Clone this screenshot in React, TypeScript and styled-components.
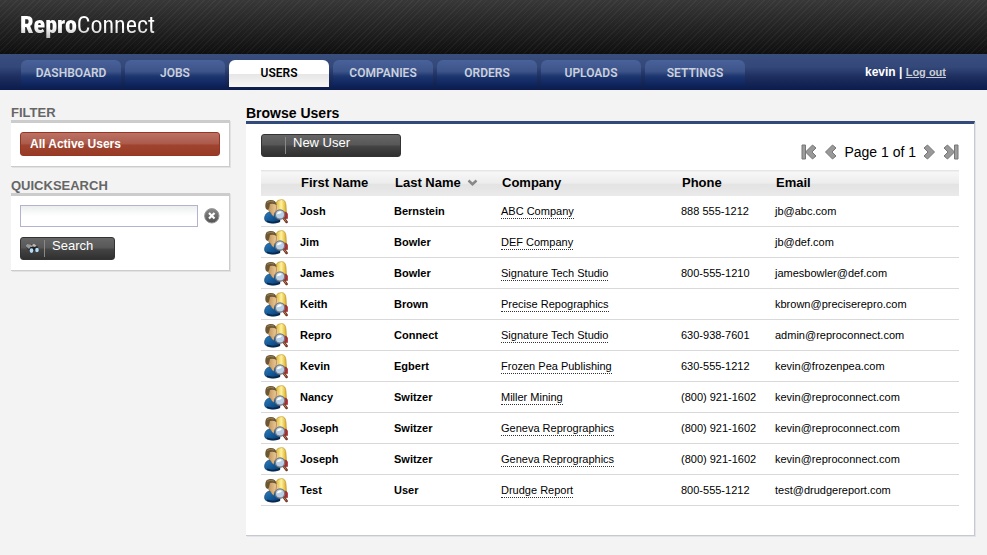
import React from "react";
import styled, { createGlobalStyle } from "styled-components";

const GlobalStyle = createGlobalStyle`
  * { box-sizing: border-box; }
  body {
    margin: 0;
    background: #f3f3f3;
    color: #000;
    font: 11px/16px "Liberation Sans", Arial, sans-serif;
  }
  button, input { font-family: inherit; }
`;

const Header = styled.header`
  display: flex;
  align-items: center;
  height: 54px;
  padding: 0 20px 4px;
  background:
    repeating-linear-gradient(135deg, rgba(255, 255, 255, 0.04) 0 1px, transparent 1px 4px),
    linear-gradient(#383838, #0f0f0f);
`;

const Logo = styled.div`
  font: 24px/32px "Roboto Condensed", "Open Sans Condensed", "Noto Sans ExtraCondensed", "Noto Sans Condensed", Roboto, sans-serif;
  color: transparent;
  background: linear-gradient(#fff 55%, #bbb 90%);
  background-clip: text;

  strong { font-weight: 900; }
`;

const Nav = styled.nav`
  display: flex;
  align-items: flex-start;
  justify-content: space-between;
  height: 36px;
  padding: 6px 41px 0 21px;
  background: linear-gradient(#384e7c, #34487a 35%, #1c2d5e 65%, #0b1c4c);
`;

const Tabs = styled.div`
  display: flex;
  gap: 4px;
`;

const Tab = styled.a<{ $active?: boolean }>`
  width: 100px;
  height: 27px;
  border-radius: 6px 6px 0 0;
  background: ${(p) =>
    p.$active
      ? "linear-gradient(#fff 50%, #e6e6e6 52%, #f6f6f6)"
      : "linear-gradient(#48629a, #3d5489 42%, #1d3670 60%, #0a2058)"};
  color: ${(p) => (p.$active ? "#000" : "#c9d0de")};
  font: 600 12px/27px Roboto, "Trebuchet MS", sans-serif;
  text-align: center;
  text-decoration: none;
`;

const Account = styled.div`
  color: #fff;
  font-size: 12px;
  font-weight: 700;
  line-height: 24px;

  a { color: #c8ccd4; font-size: 11px; }
`;

const Page = styled.div`
  display: flex;
  align-items: flex-start;
  gap: 16px;
  padding: 14px 12px 18px 11px;
`;

const Sidebar = styled.aside`
  flex: 0 0 219px;
`;

const Main = styled.main`
  flex: 1;
  min-width: 0;
`;

const SideTitle = styled.h2`
  margin: 0;
  padding-top: 2px;
  color: #666;
  font-size: 13px;
  line-height: 14px;
`;

const SidePanel = styled.section`
  margin-bottom: 10px;
  padding: 9px 9px 10px;
  background: #fff;
  border: solid #ccc;
  border-width: 3px 1px 1px 0;
  box-shadow: 1px 1px 0 #e2e2e2;
`;

const FilterButton = styled.button`
  display: block;
  width: 100%;
  height: 24px;
  padding: 0 9px;
  border: 1px solid #953522;
  border-radius: 3px;
  background: linear-gradient(#bb7164, #ab5a4a 50%, #a04431 54%, #983a24);
  color: #fff;
  font-size: 12px;
  font-weight: 700;
  line-height: 20px;
  text-align: left;
`;

const SearchRow = styled.div`
  display: flex;
  align-items: center;
  gap: 6px;
  margin-bottom: 10px;
`;

const SearchInput = styled.input`
  flex: 1;
  min-width: 0;
  height: 22px;
  padding: 2px 4px;
  border: 1px solid #b3b3d0;
  background: linear-gradient(#eceeee, #fff 50%);
  font-size: 12px;
`;

const IconButton = styled.button`
  display: flex;
  padding: 0;
  border: 0;
  background: none;
`;

const DarkButton = styled.button<{ $width: number }>`
  display: flex;
  align-items: stretch;
  width: ${(p) => p.$width}px;
  height: 23px;
  padding: 0;
  border: 1px solid #333;
  border-radius: 3px;
  background: linear-gradient(#666, #585858 45%, #434343 55%, #303030);
  color: #fff;
  font-size: 13px;
  line-height: 16px;
`;

const ButtonIcon = styled.span`
  display: flex;
  align-items: center;
  justify-content: center;
  width: 24px;
  margin: 2px 7px 2px 0;
  border-right: 1px solid #888;
`;

const MainTitle = styled.h1`
  margin: 0;
  padding-top: 2px;
  font-size: 14px;
  line-height: 15px;
`;

const MainPanel = styled.section`
  padding: 10px 15px 29px;
  background: #fff;
  border: solid #c6c9d4;
  border-width: 0 1px 1px 0;
  border-top: 3px solid #324a7b;
  box-shadow: 1px 1px 0 #e4e4e8;
`;

const Toolbar = styled.div`
  display: flex;
  align-items: flex-start;
  justify-content: space-between;
  height: 36px;
`;

const Pager = styled.div`
  display: flex;
  align-items: center;
  gap: 7px;
  height: 36px;
  font-size: 14px;
`;

const Table = styled.table`
  width: 100%;
  table-layout: fixed;
  border-collapse: separate;
  border-spacing: 0;
`;

const Col = styled.col<{ $width?: number }>`
  width: ${(p) => (p.$width ? `${p.$width}px` : "auto")};
`;

const HeadRow = styled.tr`
  height: 26px;
  background: linear-gradient(#e6e6e6 1px, #f7f7f7 2px, #ededed 50%, #e3e3e3 56%, #eaeaea);
`;

const HeadCell = styled.th`
  padding: 0 0 0 1px;
  font-size: 13px;
  line-height: 16px;
  text-align: left;

  svg { margin-left: 6px; }
`;

const Cell = styled.td<{ $bold?: boolean }>`
  height: 31px;
  padding: 0;
  border-bottom: 1px solid #d9d9d9;
  font-weight: ${(p) => (p.$bold ? 700 : 400)};
  white-space: nowrap;
`;

const IconCell = styled(Cell)`
  padding-left: 3px;

  svg { display: block; }
`;

const CompanyLink = styled.a`
  display: inline-block;
  color: #000;
  line-height: 13px;
  text-decoration: none;
  border-bottom: 1px dotted #333;
`;

const UserIcon = () => (
  <svg width="24" height="25" viewBox="0 0 24 25" aria-hidden="true">
    <defs>
      <linearGradient id="hair" x2="1"><stop stopColor="#d9b52d" /><stop offset=".5" stopColor="#fff2a0" /><stop offset="1" stopColor="#d8a91f" /></linearGradient>
      <linearGradient id="shirt" x2="1" y2="1"><stop stopColor="#2f7cba" /><stop offset=".5" stopColor="#155a98" /><stop offset="1" stopColor="#0a3466" /></linearGradient>
      <linearGradient id="skin" x2="1"><stop stopColor="#b98b55" /><stop offset="1" stopColor="#eccb95" /></linearGradient>
    </defs>
    <path d="M12 4Q13 .6 17.5 .6Q21.500 .6 22 6L22.5 14Q18 17 13 13Z" fill="url(#hair)" stroke="#b8922c" strokeWidth=".6" />
    <path d="M12 5Q14.5 6 14.5 10L13 14H11Z" fill="#efc78c" />
    <path d="M19 13Q23.6 12.5 23.6 16V19.5H19Z" fill="#b3282a" stroke="#7e1719" strokeWidth=".5" />
    <path d="M.5 20Q.5 14.5 5 13L11 13Q15.5 15 16 19V22.5Q12 25 6 24Q.5 23 .5 20Z" fill="url(#shirt)" stroke="#0b3560" strokeWidth=".5" />
    <path d="M3 21.5Q9 24 16 21V23Q9 25.5 3 23Z" fill="#08284c" />
    <path d="M3 6Q4 3 8 3Q12.5 3 12.5 8Q12.5 14 8.5 15Q4 13 3 6Z" fill="url(#skin)" stroke="#865c2d" strokeWidth=".5" />
    <path d="M1.3 6Q1.5 1.2 6 1Q12 .6 12.600 6Q9 4 6 5L5 9.5L3.5 11Q1 10 1.3 6Z" fill="#6b5734" />
    <path d="M3 3.5Q6 1.5 10 3" fill="none" stroke="#9c824e" strokeWidth=".9" />
    <path d="M7 14.5L10.5 13.5L9.5 17.5Z" fill="#dfac6d" />
    <path d="M20 19.5L22.6 23" stroke="#6e3322" strokeWidth="2.6" strokeLinecap="round" />
    <path d="M20 19.5L22.2 22.5" stroke="#cc8c58" strokeWidth=".9" />
    <circle cx="16" cy="15.5" r="4.7" fill="#b9cfe5" stroke="#73777f" strokeWidth="1.3" />
    <path d="M12.8 15.2Q13.5 12.2 17 12.2Q18.5 14 16 14.5Q14.5 15 12.8 15.2Z" fill="#fff" />
  </svg>
);

const PageArrow = ({ end, forward }: { end?: boolean; forward?: boolean }) => (
  <svg width={end ? 16 : 13} height="16" viewBox={end ? "0 0 16 16" : "0 0 13 16"} aria-hidden="true">
    <g transform={forward ? `matrix(-1 0 0 1 ${end ? 16 : 13} 0)` : undefined} strokeLinejoin="round">
      <path
        d={end ? "M4.500 8L11.5 1L15 4L11 8L15 12L11.5 15Z" : "M1.5 8L8.5 1L12 4L8 8L12 12L8.5 15Z"}
        fill="#999"
        stroke="#777"
      />
      {end && <path d="M1 1H4.5V15H1Z" fill="#9d9d9d" stroke="#777" />}
    </g>
  </svg>
);

const SortIcon = () => (
  <svg width="11" height="8" viewBox="0 0 11 8" aria-hidden="true">
    <path d="M1.5 1.5L5.5 5.2L9.5 1.5" fill="none" stroke="#888" strokeWidth="2.6" />
  </svg>
);

const ClearIcon = () => (
  <svg width="16" height="16" viewBox="0 0 16 16" aria-hidden="true">
    <defs><linearGradient id="clear" x2="0" y2="1"><stop stopColor="#8a8a8a" /><stop offset="1" stopColor="#505050" /></linearGradient></defs>
    <circle cx="7.8" cy="7.8" r="7.2" fill="url(#clear)" stroke="#999" />
    <path d="M5 5L10.5 10.5M10.5 5L5 10.5" stroke="#fff" strokeWidth="2.2" />
  </svg>
);

const BinocularsIcon = () => (
  <svg width="15" height="11" viewBox="0 0 15 11" aria-hidden="true">
    <path d="M.5 3L2 1L6 1.5L8 1L12 2.5L14 7Q14 9.5 12 9.5L9 7L8.5 9Q6 11 4.5 8Z" fill="#202020" />
    <path d="M.5 3L2 1L6 1.5L8 4L5.5 4L4 6Z" fill="#999" />
    <path d="M6.5 2L9 .8L12 3L9 4Z" fill="#bbb" />
    <ellipse cx="6.5" cy="7.6" rx="1.9" ry="2.3" fill="#b4dcf6" />
    <ellipse cx="12" cy="7" rx="1.8" ry="2.3" fill="#b4dcf6" />
  </svg>
);

const tabs = ["DASHBOARD", "JOBS", "USERS", "COMPANIES", "ORDERS", "UPLOADS", "SETTINGS"];

const users = [
  ["Josh", "Bernstein", "ABC Company", "888 555-1212", "jb@abc.com"],
  ["Jim", "Bowler", "DEF Company", "", "jb@def.com"],
  ["James", "Bowler", "Signature Tech Studio", "800-555-1210", "jamesbowler@def.com"],
  ["Keith", "Brown", "Precise Repographics", "", "kbrown@preciserepro.com"],
  ["Repro", "Connect", "Signature Tech Studio", "630-938-7601", "admin@reproconnect.com"],
  ["Kevin", "Egbert", "Frozen Pea Publishing", "630-555-1212", "kevin@frozenpea.com"],
  ["Nancy", "Switzer", "Miller Mining", "(800) 921-1602", "kevin@reproconnect.com"],
  ["Joseph", "Switzer", "Geneva Reprographics", "(800) 921-1602", "kevin@reproconnect.com"],
  ["Joseph", "Switzer", "Geneva Reprographics", "(800) 921-1602", "kevin@reproconnect.com"],
  ["Test", "User", "Drudge Report", "800-555-1212", "test@drudgereport.com"],
];

export default function App() {
  return (
    <>
      <GlobalStyle />
      <Header>
        <Logo><strong>Repro</strong>Connect</Logo>
      </Header>
      <Nav>
        <Tabs>
          {tabs.map((tab) => (
            <Tab key={tab} href="#" $active={tab === "USERS"}>{tab}</Tab>
          ))}
        </Tabs>
        <Account>kevin | <a href="#">Log out</a></Account>
      </Nav>
      <Page>
        <Sidebar>
          <SideTitle>FILTER</SideTitle>
          <SidePanel>
            <FilterButton>All Active Users</FilterButton>
          </SidePanel>
          <SideTitle>QUICKSEARCH</SideTitle>
          <SidePanel>
            <SearchRow>
              <SearchInput type="text" aria-label="Quicksearch" />
              <IconButton aria-label="Clear search"><ClearIcon /></IconButton>
            </SearchRow>
            <DarkButton $width={95}><ButtonIcon><BinocularsIcon /></ButtonIcon>Search</DarkButton>
          </SidePanel>
        </Sidebar>
        <Main>
          <MainTitle>Browse Users</MainTitle>
          <MainPanel>
            <Toolbar>
              <DarkButton $width={140}><ButtonIcon />New User</DarkButton>
              <Pager>
                <IconButton aria-label="First page"><PageArrow end /></IconButton>
                <IconButton aria-label="Previous page"><PageArrow /></IconButton>
                <span>Page 1 of 1</span>
                <IconButton aria-label="Next page"><PageArrow forward /></IconButton>
                <IconButton aria-label="Last page"><PageArrow end forward /></IconButton>
              </Pager>
            </Toolbar>
            <Table>
              <colgroup>
                <Col $width={39} /><Col $width={94} /><Col $width={107} />
                <Col $width={180} /><Col $width={94} /><Col />
              </colgroup>
              <thead>
                <HeadRow>
                  <HeadCell />
                  <HeadCell>First Name</HeadCell>
                  <HeadCell>Last Name<SortIcon /></HeadCell>
                  <HeadCell>Company</HeadCell>
                  <HeadCell>Phone</HeadCell>
                  <HeadCell>Email</HeadCell>
                </HeadRow>
              </thead>
              <tbody>
                {users.map(([first, last, company, phone, email], i) => (
                  <tr key={i}>
                    <IconCell><UserIcon /></IconCell>
                    <Cell $bold>{first}</Cell>
                    <Cell $bold>{last}</Cell>
                    <Cell><CompanyLink href="#">{company}</CompanyLink></Cell>
                    <Cell>{phone}</Cell>
                    <Cell>{email}</Cell>
                  </tr>
                ))}
              </tbody>
            </Table>
          </MainPanel>
        </Main>
      </Page>
    </>
  );
}
